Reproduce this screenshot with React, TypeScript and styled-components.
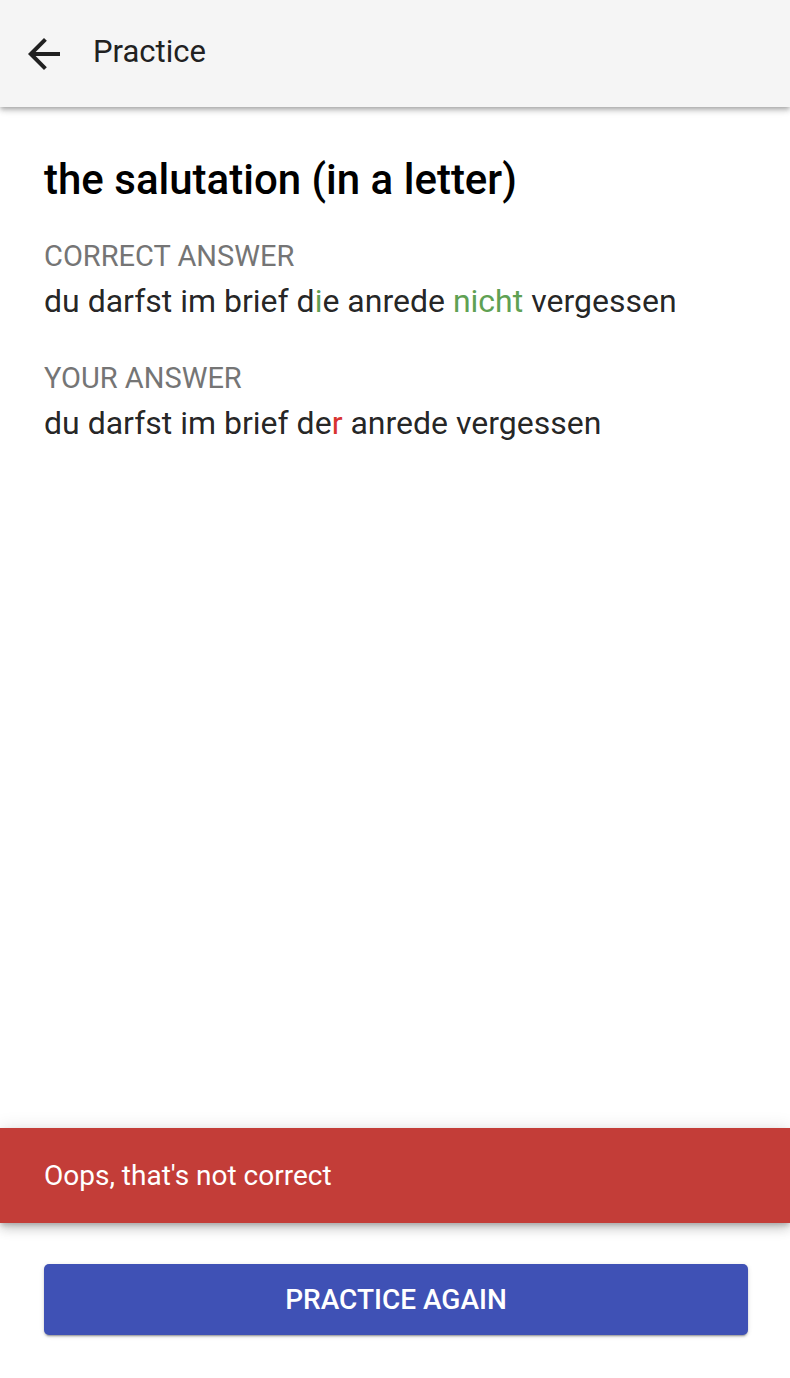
import React from "react";
import styled, { createGlobalStyle } from "styled-components";

const Global = createGlobalStyle`
  html, body { margin: 0; padding: 0; background: #ffffff; }
  body { font-family: Roboto, "Noto Sans", Arial, sans-serif; -webkit-font-smoothing: antialiased; }
  * { box-sizing: border-box; }
`;

const Page = styled.div`
  min-height: 100vh;
  display: flex;
  flex-direction: column;
  background: #ffffff;
`;

const AppBar = styled.header`
  height: 107px;
  flex: none;
  background: #f5f5f5;
  display: flex;
  align-items: center;
  padding-left: 20px;
  box-shadow: 0 2px 4px -1px rgba(0,0,0,0.2), 0 4px 5px 0 rgba(0,0,0,0.14), 0 1px 10px 0 rgba(0,0,0,0.12);
  position: relative;
  z-index: 2;
`;

const IconButton = styled.button`
  width: 48px;
  height: 48px;
  padding: 0;
  border: none;
  background: transparent;
  display: flex;
  align-items: center;
  justify-content: center;
  color: #212121;
`;

const BarTitle = styled.h1`
  margin: 0 0 3px 25px;
  font-size: 31px;
  font-weight: 400;
  line-height: 40px;
  color: #212121;
`;

const Content = styled.main`
  flex: 1;
  padding: 45px 44px 0 44px;
  display: flex;
  flex-direction: column;
`;

const Prompt = styled.h2`
  margin: 0;
  font-size: 42px;
  font-weight: 500;
  line-height: 56px;
  color: #000000;
`;

const Label = styled.div<{ $first?: boolean }>`
  margin-top: ${(p) => (p.$first ? "30px" : "39px")};
  font-size: 29px;
  line-height: 36px;
  color: #757575;
  text-transform: uppercase;
`;

const Answer = styled.div`
  margin-top: 7px;
  font-size: 32px;
  line-height: 40px;
  color: rgba(0, 0, 0, 0.87);
`;

const Mark = styled.span<{ $kind: "add" | "wrong" }>`
  color: ${(p) => (p.$kind === "add" ? "#5fa153" : "#d8322f")};
`;

const Banner = styled.div`
  height: 95px;
  flex: none;
  background: #c33d38;
  display: flex;
  align-items: center;
  padding-left: 44px;
  color: #ffffff;
  font-size: 28px;
  box-shadow: 0 3px 5px -1px rgba(0,0,0,0.2), 0 6px 10px 0 rgba(0,0,0,0.14), 0 1px 18px 0 rgba(0,0,0,0.12);
  position: relative;
  z-index: 1;
`;

const Footer = styled.div`
  flex: none;
  padding: 41px 42px 43px 44px;
`;

const PrimaryButton = styled.button`
  display: block;
  width: 100%;
  height: 71px;
  border: none;
  border-radius: 5px;
  background: #3f51b5;
  color: #ffffff;
  font-family: Roboto, "Noto Sans", Arial, sans-serif;
  font-size: 28px;
  font-weight: 500;
  text-transform: uppercase;
  box-shadow: 0 3px 1px -2px rgba(0,0,0,0.2), 0 2px 2px 0 rgba(0,0,0,0.14), 0 1px 5px 0 rgba(0,0,0,0.12);
`;

const ArrowBack = () => (
  <svg width="48" height="48" viewBox="0 0 24 24" fill="currentColor" aria-hidden>
    <path d="M20 11H7.83l5.59-5.59L12 4l-8 8 8 8 1.41-1.41L7.83 13H20v-2z" />
  </svg>
);

export default function App() {
  return (
    <>
      <Global />
      <Page>
        <AppBar>
          <IconButton aria-label="back">
            <ArrowBack />
          </IconButton>
          <BarTitle>Practice</BarTitle>
        </AppBar>
        <Content>
          <Prompt>the salutation (in a letter)</Prompt>
          <Label $first>Correct answer</Label>
          <Answer>
            du darfst im brief d<Mark $kind="add">i</Mark>e anrede <Mark $kind="add">nicht</Mark> vergessen
          </Answer>
          <Label>Your answer</Label>
          <Answer>
            du darfst im brief de<Mark $kind="wrong">r</Mark> anrede vergessen
          </Answer>
        </Content>
        <Banner>Oops, that's not correct</Banner>
        <Footer>
          <PrimaryButton>Practice again</PrimaryButton>
        </Footer>
      </Page>
    </>
  );
}
